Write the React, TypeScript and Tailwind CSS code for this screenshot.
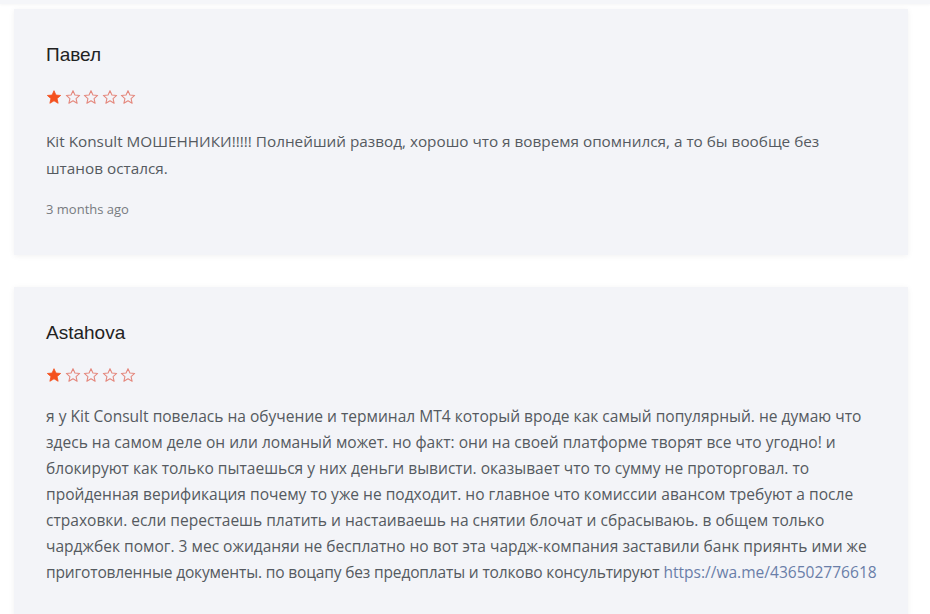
import React from "react";

type Review = {
  id: number;
  author: string;
  rating: number;
  lines: string[];
  link?: string;
  date?: string;
  textClass: string;
};

const reviews: Review[] = [
  {
    id: 1,
    author: "Павел",
    rating: 1,
    lines: [
      "Kit Konsult МОШЕННИКИ!!!!! Полнейший развод, хорошо что я вовремя опомнился, а то бы вообще без",
      "штанов остался.",
    ],
    date: "3 months ago",
    textClass: "mt-[23px] text-[15.3px] leading-[27px]",
  },
  {
    id: 2,
    author: "Astahova",
    rating: 1,
    lines: [
      "я у Kit Consult повелась на обучение и терминал MT4 который вроде как самый популярный. не думаю что",
      "здесь на самом деле он или ломаный может. но факт: они на своей платформе творят все что угодно! и",
      "блокируют как только пытаешься у них деньги вывисти. оказывает что то сумму не проторговал. то",
      "пройденная верификация почему то уже не подходит. но главное что комиссии авансом требуют а после",
      "страховки. если перестаешь платить и настаиваешь на снятии блочат и сбрасываюь. в общем только",
      "чарджбек помог. 3 мес ожиданяи не бесплатно но вот эта чардж-компания заставили банк приянть ими же",
      "приготовленные документы. по воцапу без предоплаты и толково консультируют",
    ],
    link: "https://wa.me/436502776618",
    textClass: "mt-[20px] text-[15.55px] leading-[26px]",
  },
];

const Star = ({ filled }: { filled: boolean }) => (
  <svg width="16" height="16" viewBox="0 0 24 24" className="shrink-0">
    <path
      d="M12 2.5l2.9 6.6 7.1.6-5.4 4.7 1.6 7-6.2-3.7-6.2 3.7 1.6-7L2 9.7l7.1-.6z"
      fill={filled ? "#f4511e" : "none"}
      stroke={filled ? "#f4511e" : "#e4877c"}
      strokeWidth={filled ? 1.2 : 1.6}
      strokeLinejoin="round"
    />
  </svg>
);

const ReviewCard = ({ review }: { review: Review }) => (
  <div className="bg-[#f3f4f8] shadow-[0_1px_6px_rgba(0,0,0,0.06)] pt-[34px] pb-[36px] pl-8 pr-4">
    <h3 className="text-[19px] leading-6 text-[#222] font-['Liberation_Sans',Arial,sans-serif]">
      {review.author}
    </h3>
    <div className="flex items-center gap-[2.5px] mt-[22px]">
      {[1, 2, 3, 4, 5].map((n) => (
        <Star key={n} filled={n <= review.rating} />
      ))}
    </div>
    <p className={`${review.textClass} text-[#555a60] font-['Open_Sans',sans-serif]`}>
      {review.lines.map((line, i) =>
        i === review.lines.length - 1 && review.link ? (
          <span key={i} className="block whitespace-nowrap">
            <span className="tracking-[-0.17px]">{line}</span>{" "}
            <a href="#" className="text-[#6a7ea8]">
              {review.link}
            </a>
          </span>
        ) : (
          <span key={i} className="block whitespace-nowrap">
            {line}
          </span>
        )
      )}
    </p>
    {review.date && (
      <div className="mt-[17px] text-[13px] leading-5 text-[#777b80] font-['Open_Sans',sans-serif]">
        {review.date}
      </div>
    )}
  </div>
);

export default function App() {
  return (
    <div className="w-[930px] h-[614px] overflow-hidden bg-white">
      <div className="h-[4px] bg-[#f5f6f9] shadow-[0_1px_3px_rgba(0,0,0,0.04)]" />
      <div className="flex flex-col gap-8 pt-[5px] pl-[14px] pr-[22px]">
        {reviews.map((r) => (
          <ReviewCard key={r.id} review={r} />
        ))}
      </div>
    </div>
  );
}
